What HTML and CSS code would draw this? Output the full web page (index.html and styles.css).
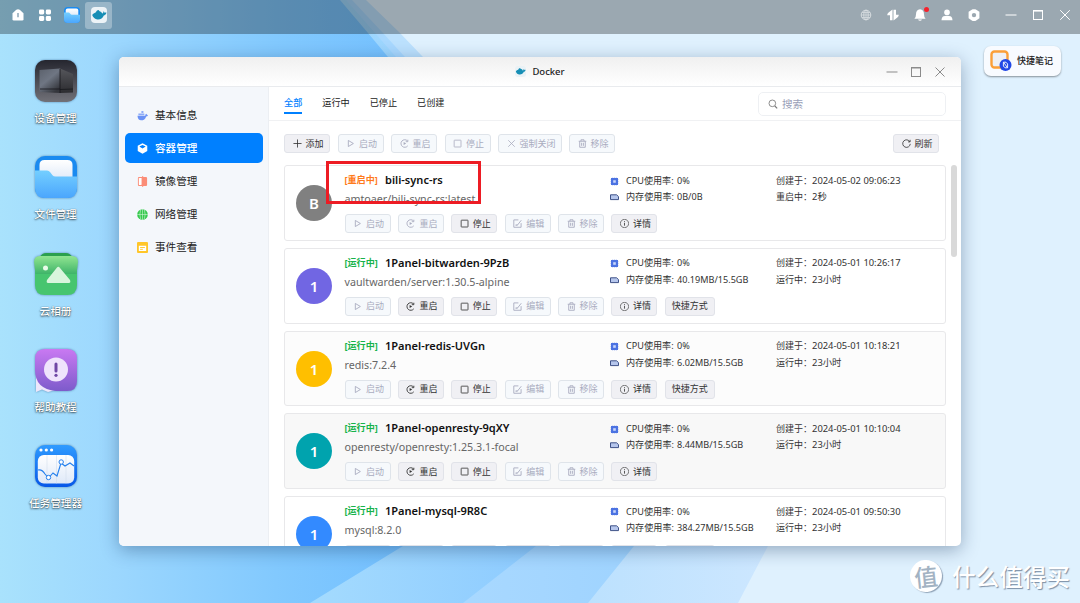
FILE: index.html
```html
<!DOCTYPE html>
<html lang="zh-CN">
<head>
<meta charset="utf-8">
<title>Docker</title>
<link rel="stylesheet" href="styles.css">
</head>
<body>
<svg class="defs" width="0" height="0" aria-hidden="true">
  <defs>
    <symbol id="play" viewBox="0 0 10 10"><path d="M2.6 1.6 8.2 5 2.6 8.4Z" fill="none" stroke="currentColor" stroke-linejoin="round"/></symbol>
    <symbol id="restart" viewBox="0 0 10 10"><path d="M8.2 2A4.2 4.2 0 1 0 8.6 7.6M8.7 .8V3H6.4" fill="none" stroke="currentColor"/><path d="M4 3.2 6.9 5 4 6.8Z" fill="currentColor"/></symbol>
    <symbol id="stop" viewBox="0 0 10 10"><rect x="1.3" y="1.3" width="7.6" height="7.6" rx=".5" fill="none" stroke="currentColor" stroke-width=".9"/></symbol>
    <symbol id="edit" viewBox="0 0 10 10"><path d="M6 1H.9V9.2H9V4.6M3.6 6.7H5L9.2 1.4M2.6 6.8H5" fill="none" stroke="currentColor"/></symbol>
    <symbol id="trash" viewBox="0 0 10 10"><path d="M.8 2.5H9.2M3.3 2.3V.9H6.7V2.3M1.9 2.6V9.2H8.1V2.6M4 4.2V7.6M6 4.2V7.6" fill="none" stroke="currentColor"/></symbol>
    <symbol id="info" viewBox="0 0 10 10"><circle cx="5" cy="5" r="4.6" fill="none" stroke="currentColor" stroke-width=".7"/><path d="M5 4.2V7.4M5 2.4V3.3" stroke="currentColor" stroke-width=".9"/></symbol>
    <symbol id="cross" viewBox="0 0 10 10"><path d="M1.4 1.4 8.6 8.6M8.6 1.4 1.4 8.6" fill="none" stroke="currentColor" stroke-width=".9"/></symbol>
    <symbol id="plus" viewBox="0 0 10 10"><path d="M5 .5V9.5M.5 5H9.5" stroke="currentColor" stroke-width=".9"/></symbol>
    <symbol id="refresh" viewBox="0 0 10 10"><path d="M8.7 3.1A4.2 4.2 0 1 0 9.2 5.4M9 .9V3.2H6.7" fill="none" stroke="currentColor" stroke-width=".9"/></symbol>
    <symbol id="square" viewBox="0 0 12 12"><rect x="1.5" y="1.5" width="9" height="9" fill="none" stroke="currentColor"/><path d="M1 2H11" stroke="currentColor" stroke-width="1.2"/></symbol>
    <symbol id="minus" viewBox="0 0 12 12"><path d="M.5 6H11.5" stroke="currentColor"/></symbol>
    <symbol id="cpu" viewBox="0 0 9 9"><path d="M1 1H8V8H1Z" fill="#4c73e2"/><path d="M2.7 .3V8.7M4.5 .3V8.7M6.3 .3V8.7M.3 2.7H8.7M.3 4.5H8.7M.3 6.3H8.7" stroke="#4c73e2" stroke-width=".7" opacity=".5"/><path d="M3.2 3.2H5.8V5.8H3.2Z" fill="#c8d6fa"/></symbol>
    <symbol id="mem" viewBox="0 0 9 9"><path d="M.5 1.8H6.6L8.5 3.6V6.6H.5Z" fill="#b6c6ec" stroke="#3f5288" stroke-linejoin="round"/></symbol>
    <symbol id="whale" viewBox="0 0 16 16"><path d="M1.2 8C2.4 6.8 3 6 4.6 5.6L6 3.4 7.6 3.1 8.6 4.3 10.2 4.9 11.2 6.6C12.2 6.5 12.5 5.4 12.4 4.3 13.2 4.8 13.5 5.4 13.7 5.9 14.3 5.4 15 5.5 15.5 5.7 14.8 7.6 13.8 8.3 12.8 8.5 11.6 11.2 9.4 12.8 6.4 12.5 4 12.2 2.1 10.6 1.2 8Z" fill="#178eb5"/></symbol>
    <linearGradient id="gFolder" x2="0" y2="1"><stop stop-color="#74cfff"/><stop offset="1" stop-color="#4ba6fd"/></linearGradient>
    <linearGradient id="gBlue" x2="0" y2="1"><stop stop-color="#2f9bff"/><stop offset="1" stop-color="#0758e8"/></linearGradient>
    <linearGradient id="gPurple" x2="0" y2="1"><stop stop-color="#c979f2"/><stop offset="1" stop-color="#7d5bcb"/></linearGradient>
    <linearGradient id="gDark" x2="0" y2="1"><stop stop-color="#25262f"/><stop offset="1" stop-color="#717178"/></linearGradient>
    <linearGradient id="gBox" x2=".7" y2="1"><stop stop-color="#5b616c"/><stop offset=".5" stop-color="#6f7683"/><stop offset="1" stop-color="#34363c"/></linearGradient>
    <linearGradient id="gSide" x2="0" y2="1"><stop stop-color="#55565b"/><stop offset="1" stop-color="#2c2c30"/></linearGradient>
    <linearGradient id="gGreen" x2="0" y2="1"><stop stop-color="#91e591"/><stop offset="1" stop-color="#3fb469"/></linearGradient>
    <linearGradient id="gPaper" x2="0" y2="1"><stop stop-color="#fff"/><stop offset="1" stop-color="#dfe9f8"/></linearGradient>
    <symbol id="folder" viewBox="0 0 42 42"><rect width="42" height="42" rx="10" fill="#1a8af0"/><path d="M4.5 22V9Q4.5 4 9.5 4H32.5Q37.5 4 37.5 9V24H4.5Z" fill="url(#gPaper)"/><path d="M0 14.5H12Q14 14.5 15.2 16.2L17.5 19.2Q18.5 20.5 20.5 20.5H42V32Q42 42 32 42H10Q0 42 0 32Z" fill="url(#gFolder)"/></symbol>
  </defs>
</svg>

<svg class="wallpaper" viewBox="0 0 1080 603" preserveAspectRatio="none" aria-hidden="true">
  <defs>
    <linearGradient id="w0" x1="0" x2="460" gradientUnits="userSpaceOnUse"><stop stop-color="#a9e2fc"/><stop offset=".25" stop-color="#9cd7fe"/><stop offset=".6" stop-color="#82c9fe"/><stop offset="1" stop-color="#6dbcff"/></linearGradient>
    <linearGradient id="w1" x1="320" x2="540" gradientUnits="userSpaceOnUse"><stop stop-color="#a3dafe"/><stop offset="1" stop-color="#8dcbff"/></linearGradient>
    <linearGradient id="w2" x1="470" x2="650" gradientUnits="userSpaceOnUse"><stop stop-color="#a8d8ff"/><stop offset="1" stop-color="#9ed3ff"/></linearGradient>
    <linearGradient id="w3" x1="590" x2="770" gradientUnits="userSpaceOnUse"><stop stop-color="#bce1fe"/><stop offset="1" stop-color="#cde7ff"/></linearGradient>
  </defs>
  <rect width="1080" height="603" fill="url(#w0)"/>
  <path d="M340 0 368 33 388 57 600 420 403 546 310 603H1080V0Z" fill="url(#w1)"/>
  <path d="M346 0 375 33 396 57 700 400 536 546 463 603H1080V0Z" fill="url(#w2)"/>
  <path d="M352 0 383 33 405 57 720 420 634 546 588 603H1080V0Z" fill="url(#w3)"/>
  <path d="M366 0 400 33 423 57 800 460 768 546 738 603H1080V0Z" fill="#dff1fe"/>
</svg>

<header class="taskbar">
  <div class="tray">
    <svg class="tray-icon" viewBox="0 0 14 14"><path d="M1.5 5.2 5.3 1.8Q7 .6 8.7 1.8L12.5 5.2V11.2Q12.5 12.5 11.2 12.5H2.8Q1.5 12.5 1.5 11.2Z" fill="#fff"/><path d="M7 5V9.2" stroke="#7b99ad" stroke-width="1.3"/></svg>
    <svg class="tray-icon" viewBox="0 0 14 14" fill="#fff"><rect x="1" y="1.5" width="5.2" height="5" rx="1.4"/><rect x="7.8" y="1.5" width="5.2" height="5" rx="1.4"/><rect x="1" y="8" width="5.2" height="5" rx="1.4"/><rect x="7.8" y="8" width="5.2" height="5" rx="1.4"/></svg>
    <svg class="tray-app"><use href="#folder"/></svg>
    <div class="tray-active"><svg class="tray-tile"><use href="#whale"/></svg></div>
  </div>
  <div class="status">
    <svg class="tray-icon dim" viewBox="0 0 14 14" fill="none" stroke="#fff"><circle cx="7" cy="7" r="4.8"/><ellipse cx="7" cy="7" rx="2.2" ry="4.8"/><path d="M2.2 7H11.8M3 4.5H11M3 9.5H11M7 2V12" stroke-width=".8"/></svg>
    <svg class="tray-icon" viewBox="0 0 14 14"><path d="M6.5 1.6V12.2H4V7.2H1.2Q1.2 5.6 2.6 4.4ZM7.5 12.4V1.8H10V6.8H12.8Q12.8 8.4 11.4 9.6Z" fill="#fff"/></svg>
    <div class="bell"><svg class="tray-icon" viewBox="0 0 14 14" fill="#fff"><path d="M7 1.3Q11 2 11 6.2L11.4 9 12.6 10.8H1.4L2.6 9 3 6.2Q3 2 7 1.3ZM5 11.5H9Q8.4 12.8 7 12.8T5 11.5Z"/></svg><i class="dot"></i></div>
    <svg class="tray-icon" viewBox="0 0 14 14" fill="#fff"><circle cx="7" cy="4.4" r="2.8"/><path d="M1.5 12.3Q1.6 8 5 8H9Q12.4 8 12.5 12.3Z"/></svg>
    <svg class="tray-icon" viewBox="0 0 14 14"><path d="M5.6 1.2H8.4L12.4 3.8V10.2L8.4 12.9H5.6L1.6 10.2V3.8Z" fill="#fff"/><circle cx="7" cy="7.1" r="2.2" fill="#9ca8b1"/></svg>
    <svg class="sys first"><use href="#minus"/></svg>
    <svg class="sys"><use href="#square"/></svg>
    <svg class="sys" viewBox="0 0 12 12"><path d="M1.2 1.2 10.8 10.8M10.8 1.2 1.2 10.8" stroke="currentColor"/></svg>
  </div>
</header>

<main class="desktop">
  <nav class="shortcuts">
    <a class="shortcut"><svg class="app" viewBox="0 0 42 42"><rect width="42" height="42" rx="10" fill="url(#gDark)"/><path d="M4.5 10 25 8.5V33L4.5 32Z" fill="url(#gBox)"/><path d="M25 8.5 38 14V32.5L25 33Z" fill="url(#gSide)"/><path d="M5 29H25M25 29.5 38 29M25 9V33" stroke="#17181c" stroke-width=".8"/></svg><span>设备管理</span></a>
    <a class="shortcut"><svg class="app"><use href="#folder"/></svg><span>文件管理</span></a>
    <a class="shortcut"><svg class="app" viewBox="0 0 42 42"><path d="M5 4Q7 0 11 0H31Q35 0 37 4V12H5Z" fill="#2ba04e"/><path d="M0 18H42V32Q42 42 32 42H10Q0 42 0 32Z" fill="#47c56f"/><path d="M-1 9Q-1 3 5 3H37Q43 3 43 9L41.6 21H.4Z" fill="url(#gGreen)"/><circle cx="10.5" cy="15" r="2.5" fill="#eafbe9"/><path d="M22 14.5Q23.5 13 25 15L35 27Q36 30 34 30H13Q11 30 12 27Z" fill="#d9f5dc"/></svg><span>云相册</span></a>
    <a class="shortcut"><svg class="app" viewBox="0 0 42 42"><path d="M1 26V43L7 40.5 13 43 24 40Z" fill="#eee7fb"/><path d="M10 0H32Q42 0 42 10V32Q42 42 32 42H21Q0 40 0 21V10Q0 0 10 0Z" fill="url(#gPurple)"/><circle cx="21" cy="20.5" r="12" fill="#efe3fc"/><path d="M21 15V22" stroke="#7047a5" stroke-width="3" stroke-linecap="round"/><circle cx="21" cy="26.3" r="1.6" fill="#7047a5"/></svg><span>帮助教程</span></a>
    <a class="shortcut"><svg class="app" viewBox="0 0 42 42"><rect width="42" height="42" rx="10" fill="url(#gBlue)"/><circle cx="6" cy="5" r="1.6" fill="#fff"/><circle cx="11.3" cy="5" r="1.6" fill="#fff"/><circle cx="16.6" cy="5" r="1.6" fill="#fff"/><rect x="2.8" y="10" width="36.4" height="28.5" rx="6" fill="url(#gPaper)"/><path d="M12 10V38.5M21.5 10V38.5M31 10V38.5" stroke="#ccd8ea" stroke-width=".5"/><path d="M3 25Q7 24 10 29L13.5 33 18 28 22 31 26 18 30 21 35 18 39 21" fill="none" stroke="#2480ee" stroke-width="1.1"/><circle cx="13.5" cy="32.5" r="2.2" fill="#fff" stroke="#2480ee"/><circle cx="26.2" cy="17" r="2.2" fill="#fff" stroke="#2480ee"/></svg><span>任务管理器</span></a>
  </nav>

  <section class="window">
    <div class="titlebar">
      <div class="title"><svg class="title-icon"><use href="#whale"/></svg><span>Docker</span></div>
      <div class="controls"><svg><use href="#minus"/></svg><svg><use href="#square"/></svg><svg viewBox="0 0 12 12"><path d="M1.5 1.5 10.5 10.5M10.5 1.5 1.5 10.5" stroke="currentColor"/></svg></div>
    </div>
    <div class="window-body">
      <aside class="sidebar">
        <a class="nav"><svg viewBox="0 0 12 12" fill="#6b92f5"><path d="M.5 6.2H9Q9 4.6 10 4L11 5.2 12 5.6Q11.3 7 10 7 8.7 11.3 4.4 11.3 1 11.2.5 6.2Z"/><path d="M1.5 3.8H8V5.6H1.5ZM4.8 1H7V3.2H4.8Z" opacity=".75"/></svg>基本信息</a>
        <a class="nav active"><svg viewBox="0 0 12 12"><path d="M6 .4 11.2 3V8.8L6 11.7.8 8.8V3Z" fill="#fff"/><path d="M2.5 3.8 6 2.3 9.5 3.8 6 6Z" fill="#0080ff"/></svg>容器管理</a>
        <a class="nav"><svg viewBox="0 0 12 12"><rect x="1" y="1" width="10" height="10" rx="1.2" fill="#fb8d77"/><rect x="2" y="2.3" width="3" height="7.4" rx=".5" fill="#fff"/><path d="M6.2 0V12" stroke="#fb8d77"/></svg>镜像管理</a>
        <a class="nav"><svg viewBox="0 0 12 12"><circle cx="6" cy="6" r="5.8" fill="#36c94e"/><path d="M0 6H12M6 0V12M4 1Q2.2 6 4 11M8 1Q9.8 6 8 11" fill="none" stroke="#dcf7e1" stroke-width=".6"/></svg>网络管理</a>
        <a class="nav"><svg viewBox="0 0 12 12"><rect x="0" y="0" width="12" height="12" rx="1.2" fill="#ffc629"/><path d="M2 4.2H10V9.8H2Z" fill="#fff"/><path d="M3.4 6H8.6M3.4 8H6.4" stroke="#ffc629"/></svg>事件查看</a>
      </aside>
      <div class="content">
        <div class="tabs">
          <a class="tab on">全部</a><a class="tab">运行中</a><a class="tab">已停止</a><a class="tab">已创建</a>
          <label class="search"><svg viewBox="0 0 12 12" fill="none" stroke="currentColor"><circle cx="5.2" cy="5.2" r="4"/><path d="M8.2 8.4 11 11.2" stroke-width="1.3"/></svg><span>搜索</span></label>
        </div>
        <div class="toolbar">
          <div class="btn"><svg><use href="#plus"/></svg>添加</div>
          <div class="btn off"><svg><use href="#play"/></svg>启动</div>
          <div class="btn off"><svg><use href="#restart"/></svg>重启</div>
          <div class="btn off"><svg><use href="#stop"/></svg>停止</div>
          <div class="btn off"><svg><use href="#cross"/></svg>强制关闭</div>
          <div class="btn off"><svg><use href="#trash"/></svg>移除</div>
          <div class="btn refresh"><svg><use href="#refresh"/></svg>刷新</div>
        </div>
        <div class="list">
          <article class="card">
            <div class="avatar gray">B</div>
            <div class="main">
              <div class="name"><b class="state wait">[重启中]</b><strong>bili-sync-rs</strong></div>
              <div class="image">amtoaer/bili-sync-rs:latest</div>
              <div class="actions"><div class="btn off"><svg><use href="#play"/></svg>启动</div><div class="btn off"><svg><use href="#restart"/></svg>重启</div><div class="btn"><svg><use href="#stop"/></svg>停止</div><div class="btn off"><svg><use href="#edit"/></svg>编辑</div><div class="btn off"><svg><use href="#trash"/></svg>移除</div><div class="btn"><svg><use href="#info"/></svg>详情</div></div>
            </div>
            <div class="usage"><p><svg><use href="#cpu"/></svg><span>CPU使用率:</span>0%</p><p><svg><use href="#mem"/></svg><span>内存使用率:</span>0B/0B</p></div>
            <div class="times"><p>创建于：<span>2024-05-02 09:06:23</span></p><p>重启中：<span>2秒</span></p></div>
          </article>
          <article class="card">
            <div class="avatar violet">1</div>
            <div class="main">
              <div class="name"><b class="state">[运行中]</b><strong>1Panel-bitwarden-9PzB</strong></div>
              <div class="image">vaultwarden/server:1.30.5-alpine</div>
              <div class="actions"><div class="btn off"><svg><use href="#play"/></svg>启动</div><div class="btn"><svg><use href="#restart"/></svg>重启</div><div class="btn"><svg><use href="#stop"/></svg>停止</div><div class="btn off"><svg><use href="#edit"/></svg>编辑</div><div class="btn off"><svg><use href="#trash"/></svg>移除</div><div class="btn"><svg><use href="#info"/></svg>详情</div><div class="btn wide">快捷方式</div></div>
            </div>
            <div class="usage"><p><svg><use href="#cpu"/></svg><span>CPU使用率:</span>0%</p><p><svg><use href="#mem"/></svg><span>内存使用率:</span>40.19MB/15.5GB</p></div>
            <div class="times"><p>创建于：<span>2024-05-01 10:26:17</span></p><p>运行中：<span>23小时</span></p></div>
          </article>
          <article class="card tint1">
            <div class="avatar amber">1</div>
            <div class="main">
              <div class="name"><b class="state">[运行中]</b><strong>1Panel-redis-UVGn</strong></div>
              <div class="image">redis:7.2.4</div>
              <div class="actions"><div class="btn off"><svg><use href="#play"/></svg>启动</div><div class="btn"><svg><use href="#restart"/></svg>重启</div><div class="btn"><svg><use href="#stop"/></svg>停止</div><div class="btn off"><svg><use href="#edit"/></svg>编辑</div><div class="btn off"><svg><use href="#trash"/></svg>移除</div><div class="btn"><svg><use href="#info"/></svg>详情</div><div class="btn wide">快捷方式</div></div>
            </div>
            <div class="usage"><p><svg><use href="#cpu"/></svg><span>CPU使用率:</span>0%</p><p><svg><use href="#mem"/></svg><span>内存使用率:</span>6.02MB/15.5GB</p></div>
            <div class="times"><p>创建于：<span>2024-05-01 10:18:21</span></p><p>运行中：<span>23小时</span></p></div>
          </article>
          <article class="card tint2">
            <div class="avatar teal">1</div>
            <div class="main">
              <div class="name"><b class="state">[运行中]</b><strong>1Panel-openresty-9qXY</strong></div>
              <div class="image">openresty/openresty:1.25.3.1-focal</div>
              <div class="actions"><div class="btn off"><svg><use href="#play"/></svg>启动</div><div class="btn"><svg><use href="#restart"/></svg>重启</div><div class="btn"><svg><use href="#stop"/></svg>停止</div><div class="btn off"><svg><use href="#edit"/></svg>编辑</div><div class="btn off"><svg><use href="#trash"/></svg>移除</div><div class="btn"><svg><use href="#info"/></svg>详情</div></div>
            </div>
            <div class="usage"><p><svg><use href="#cpu"/></svg><span>CPU使用率:</span>0%</p><p><svg><use href="#mem"/></svg><span>内存使用率:</span>8.44MB/15.5GB</p></div>
            <div class="times"><p>创建于：<span>2024-05-01 10:10:04</span></p><p>运行中：<span>23小时</span></p></div>
          </article>
          <article class="card">
            <div class="avatar blue">1</div>
            <div class="main">
              <div class="name"><b class="state">[运行中]</b><strong>1Panel-mysql-9R8C</strong></div>
              <div class="image">mysql:8.2.0</div>
              <div class="actions"><div class="btn"></div><div class="btn"></div><div class="btn"></div><div class="btn"></div><div class="btn"></div><div class="btn"></div><div class="btn wide"></div></div>
            </div>
            <div class="usage"><p><svg><use href="#cpu"/></svg><span>CPU使用率:</span>0%</p><p><svg><use href="#mem"/></svg><span>内存使用率:</span>384.27MB/15.5GB</p></div>
            <div class="times"><p>创建于：<span>2024-05-01 09:50:30</span></p><p>运行中：<span>23小时</span></p></div>
          </article>
          <i class="thumb"></i>
        </div>
        <i class="highlight"></i>
      </div>
    </div>
  </section>

  <aside class="note"><svg viewBox="0 0 22 22"><rect x="1.5" y="1.5" width="16" height="16" rx="3" fill="#eef0f5" stroke="#fb9f38" stroke-width="2.4"/><circle cx="15.5" cy="15" r="6" fill="#2148e6"/><path d="M13.4 12.2H16L17.6 14V17.8H15L13.4 16ZM13.6 12.4 17.4 17.6" fill="none" stroke="#fff" stroke-width=".9"/></svg><span>快捷笔记</span></aside>
</main>
<div class="watermark"><span class="seal">值</span><span>什么值得买</span></div>
</body>
</html>
```
FILE: styles.css
```css
* { box-sizing: border-box; }
body {
  margin: 0;
  width: 1080px;
  height: 603px;
  overflow: hidden;
  position: relative;
  font-family: "Noto Sans", "Noto Sans CJK SC", sans-serif;
  font-size: 9px;
  line-height: 14px;
  color: #333;
}
svg { display: block; flex: none; overflow: visible; }
i { display: block; }
p { margin: 0; }
.defs { position: absolute; }
.wallpaper { position: absolute; inset: 0; width: 1080px; height: 603px; z-index: -1; }

.taskbar {
  height: 33.5px;
  padding: 1px 9px 4px 11px;
  display: flex;
  align-items: center;
  justify-content: space-between;
  background: rgba(0, 0, 0, .3);
  color: #fff;
}
.tray, .status { display: flex; align-items: center; gap: 13px; }
.tray-icon { width: 14px; height: 14px; }
.tray-app { width: 16px; height: 16px; margin: 0 -1px; }
.tray-active {
  width: 27px; height: 27px; margin-left: -7px;
  display: grid; place-items: center;
  border-radius: 3px;
  background: rgba(255, 255, 255, .3);
}
.tray-tile { width: 16px; height: 16px; border-radius: 4px; background: #edf3f7; }
.dim { opacity: .6; }
.bell { position: relative; }
.dot { position: absolute; right: -2px; top: -1.5px; width: 5px; height: 5px; border-radius: 50%; background: #f5222d; }
.sys { width: 12px; height: 12px; margin-left: 2px; }
.sys.first { margin-left: 11px; }

.desktop { display: flex; align-items: flex-start; }
.shortcuts { width: 111px; margin-right: 8px; padding-top: 26.5px; display: grid; grid-auto-rows: 96.3px; }
.shortcut { display: flex; flex-direction: column; align-items: center; gap: 8px; }
.shortcut span {
  font-size: 10.6px; line-height: 16px; color: #fff; font-weight: 500;
  text-shadow: 0 1px 2px rgba(0, 0, 0, .65), 0 0 1px rgba(0, 0, 0, .5);
}
.app { width: 42px; height: 42px; filter: drop-shadow(0 0 1px rgba(0, 40, 90, .45)); }

.window {
  width: 842px; height: 489px; margin-top: 23.5px;
  display: flex; flex-direction: column;
  overflow: hidden;
  border-radius: 5px;
  background: #fff;
  box-shadow: 0 4px 18px rgba(20, 50, 90, .38);
}
.titlebar {
  height: 30px; flex: none; position: relative;
  display: flex; align-items: center; justify-content: center;
  background: linear-gradient(#f0f0f0, #fff);
  border-bottom: 1px solid #e9ebee;
}
.title { display: flex; align-items: center; gap: 6px; font-size: 9.5px; font-weight: 500; color: #222; }
.title-icon { width: 11px; height: 11px; border-radius: 3px; background: #eaf2f6; }
.controls { position: absolute; right: 15px; top: 9px; display: flex; gap: 12px; color: #8b8b8b; }
.controls svg { width: 12px; height: 12px; }
.window-body { flex: 1; display: flex; min-height: 0; }
.sidebar { width: 150px; padding: 12.5px 6px; background: #f4f7fb; border-right: 1px solid #eceff3; }
.nav {
  height: 30px; margin-bottom: 3px; padding: 1px 0 0 12px;
  display: flex; align-items: center; gap: 7px;
  border-radius: 5px;
  font-size: 10.6px; color: #222;
}
.nav svg { width: 11px; height: 11px; }
.nav.active { background: #0080ff; color: #fff; width: 138px; font-weight: 500; }
.content { position: relative; flex: 1; display: flex; flex-direction: column; min-width: 0; }
.tabs {
  height: 34px; flex: none; padding: 5px 15px 0;
  display: flex; align-items: flex-start; gap: 20px;
  border-bottom: 1px solid #f0f1f3;
}
.tab { height: 22px; padding-top: 4px; font-size: 9.15px; color: #222; }
.tab.on { color: #0080ff; border-bottom: 2px solid #0080ff; font-weight: 500; }
.search {
  width: 188px; height: 24px; margin-left: auto; padding-left: 9px;
  display: flex; align-items: center; gap: 4px;
  border: 1px solid #eef0f3; border-radius: 5px;
  font-size: 10.6px; color: #9a9fb8;
}
.search svg { width: 10px; height: 10px; color: #777; }
.toolbar { height: 44.3px; flex: none; padding: 13px 22px 0 15px; display: flex; align-items: flex-start; gap: 7.5px; }
.btn {
  height: 19px; min-width: 46px; padding: 0 5px 0 7.5px;
  display: flex; align-items: center; gap: 4px; flex: none;
  border: 1px solid #e1e3e9; border-radius: 3px;
  background: #f0f0f4; color: #333;
  white-space: nowrap;
}
.btn svg { width: 9px; height: 9px; }
.btn.off { background: #f6f9fc; border-color: #dfe4ea; color: #a9acbf; }
.btn.wide { width: 50px; padding: 0; justify-content: center; }
.refresh { margin-left: auto; }
.list { position: relative; flex: 1; min-height: 0; padding: 0 15px; overflow: hidden; }
.card {
  height: 75.7px; margin-bottom: 7px; padding: 0 0 0 11px;
  display: grid; grid-template-columns: 48.5px 265.5px 166px 1fr;
  border: 1px solid #e8e8ea; border-radius: 3px;
  background: #fff;
}
.tint1 { background: #fcfcfc; }
.tint2 { background: #f8f8f8; }
.avatar {
  width: 36px; height: 36px; margin-top: 19px;
  display: grid; place-items: center;
  border-radius: 50%;
  color: #fff; font-size: 15px; font-weight: 600;
}
.gray { background: #808080; }
.violet { background: #7166e3; }
.amber { background: #ffbf00; }
.teal { background: #00a3ae; }
.blue { background: #338aff; }
.main { padding-top: 5px; }
.name { height: 18px; display: flex; align-items: center; gap: 6.5px; }
.state { width: 34px; white-space: nowrap; font-size: 9.1px; color: #17b34b; }
.state.wait { color: #ff7a1a; }
.name strong { font-size: 11.05px; font-weight: 600; color: #111; white-space: nowrap; }
.image { height: 25px; padding-top: 3px; font-size: 10.7px; color: #666; white-space: nowrap; }
.actions { display: flex; gap: 7.4px; }
.highlight { position: absolute; left: 57px; top: 74px; width: 155px; height: 43px; border: 3px solid #ed1c24; }
.usage, .times { padding-top: 6.5px; line-height: 16.6px; white-space: nowrap; }
.usage p, .times p { display: flex; align-items: center; height: 16.6px; }
.usage svg { width: 9px; height: 9px; margin-right: 7px; }
.usage span { width: 51px; }
.usage { font-size: 9.1px; }
.times span { font-size: 9.4px; }
.thumb { position: absolute; right: 4.5px; top: 0; width: 6px; height: 92px; border-radius: 3px; background: #d9d9d9; }

.note {
  width: 77px; height: 30px; margin: 12px 0 0 23px; padding-left: 6px;
  display: flex; align-items: center; gap: 5px;
  border-radius: 7px;
  background: #f8fbff;
  box-shadow: 0 1px 2px rgba(0, 0, 0, .4);
  font-weight: 500; color: #222;
}
.note svg { width: 22px; height: 22px; }
.watermark {
  position: absolute; left: 910px; top: 560px; z-index: 2;
  display: flex; align-items: center; gap: 10px;
  font-family: "Noto Sans CJK SC", sans-serif;
  font-size: 23.6px; line-height: 32px; font-weight: 500; color: #fff; white-space: nowrap;
  text-shadow: 1px 1px 1px rgba(90, 110, 135, .75);
}
.seal {
  width: 32px; height: 32px; border-radius: 50%;
  background: #fff; color: #a3b3c3; text-align: center;
  transform: rotate(-6deg); text-shadow: none;
  box-shadow: 1px 1px 1px rgba(90, 110, 135, .6);
}
```
